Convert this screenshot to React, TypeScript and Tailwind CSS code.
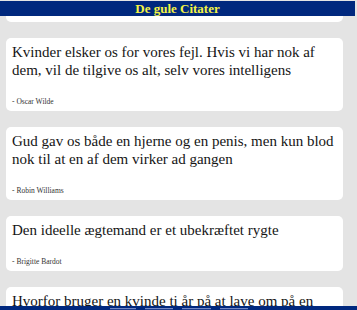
import React from "react";

const quotes = [
  {
    text: "Kærlighed er blind, men ægteskabet giver den synet tilbage",
    author: "Georg Lichtenberg",
  },
  {
    text: "Kvinder elsker os for vores fejl. Hvis vi har nok af dem, vil de tilgive os alt, selv vores intelligens",
    author: "Oscar Wilde",
  },
  {
    text: "Gud gav os både en hjerne og en penis, men kun blod nok til at en af dem virker ad gangen",
    author: "Robin Williams",
  },
  {
    text: "Den ideelle ægtemand er et ubekræftet rygte",
    author: "Brigitte Bardot",
  },
  {
    text: "Hvorfor bruger en kvinde ti år på at lave om på en mand, for derefter at klage over at han ikke er den mand hun giftede sig med?",
    author: "Barbra Streisand",
  },
];

function QuoteCard({ text, author }: { text: string; author: string }) {
  return (
    <div className="rounded-[5px] bg-white px-[6px] pt-[5px] pb-[5px]">
      <p className="text-[15px] leading-[18px] text-[#151515]">{text}</p>
      <p className="mt-[18px] text-[7.5px] leading-[9px] text-[#333]">- {author}</p>
    </div>
  );
}

export default function App() {
  return (
    <div
      className="flex h-[310px] w-[357px] flex-col overflow-hidden bg-[#e4e4e4] pt-px"
      style={{ fontFamily: '"Liberation Serif", "Times New Roman", serif' }}
    >
      <header className="relative z-10 mr-[2px] flex h-[15px] shrink-0 items-center justify-center bg-[#00287e]">
        <h1 className="text-[13px] font-bold leading-none text-[#f4f444]">De gule Citater</h1>
      </header>

      <main className="min-h-0 flex-1 overflow-hidden pl-[6px] pr-[14px]">
        {/* scrolled list: only the bottom edge of the first card is still in view */}
        <div className="-mt-[75px] flex flex-col gap-[16px]">
          {quotes.map((q, i) => (
            <div key={q.author} className={i === 0 ? "rounded-[5px] bg-white pb-[8px]" : ""}>
              <QuoteCard text={q.text} author={q.author} />
            </div>
          ))}
        </div>
      </main>

      <footer className="flex h-[4px] shrink-0 items-start justify-center gap-[9px] bg-[#00287e] pt-[2px]">
        <span className="h-[6px] w-[26px] border-t border-[#6f86c4] bg-[#1c3c8e]" />
        <span className="h-[6px] w-[28px] border-t border-[#6f86c4] bg-[#1c3c8e]" />
        <span className="h-[6px] w-[29px] border-t border-[#6f86c4] bg-[#1c3c8e]" />
        <span className="h-[6px] w-[28px] border-t border-[#6f86c4] bg-[#1c3c8e]" />
      </footer>
    </div>
  );
}
